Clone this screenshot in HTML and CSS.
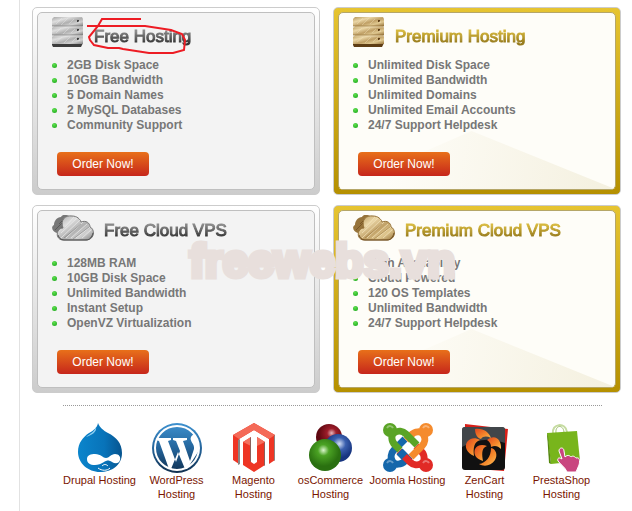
FILE: index.html
```
<!DOCTYPE html>
<html lang="en">
<head>
  <meta charset="utf-8">
  <title>Web Hosting Plans</title>
  <meta name="viewport" content="width=device-width, initial-scale=1">
  <link rel="stylesheet" href="styles.css">
</head>
<body>
  <svg class="defs" aria-hidden="true">
    <defs>
      <linearGradient id="metal" x1="0" y1="0" x2="1" y2="1">
        <stop offset="0" stop-color="#a5a5a5"/><stop offset=".3" stop-color="#dedede"/><stop offset=".55" stop-color="#b0b0b0"/><stop offset=".75" stop-color="#d0d0d0"/><stop offset="1" stop-color="#808080"/>
      </linearGradient>
      <linearGradient id="brass" x1="0" y1="0" x2="1" y2="1">
        <stop offset="0" stop-color="#b59657"/><stop offset=".3" stop-color="#ead6a6"/><stop offset=".55" stop-color="#c0a066"/><stop offset=".75" stop-color="#dfc78f"/><stop offset="1" stop-color="#96723a"/>
      </linearGradient>
      <symbol id="server" viewBox="0 0 32 30">
        <path d="M0 26h31l-2 4H1L0 28z" fill="var(--dark)"/>
        <path d="M2 0h28l1 2v7H0V2z" fill="var(--fill)"/>
        <path d="M2 9h28l1 2v7H0v-7z" fill="var(--fill)"/>
        <path d="M2 18h28l1 2v7H0v-7z" fill="var(--fill)"/>
        <path d="M0 9h31M0 18h31" stroke="var(--line)" fill="none" opacity=".7"/>
        <path d="M1 10h29M1 19h29" stroke="var(--light)" fill="none" opacity=".5"/>
        <path d="M4 7l6-6M9 8l7-7M17 7l5-5M4 16l5-5M11 17l6-6M19 16l4-4M4 25l6-5M12 26l6-6M20 25l5-5" stroke="var(--light)" opacity=".4"/>
        <path d="M25 4h2M25 13h2M25 22h2" stroke="var(--dark)" stroke-width="2"/>
        <path d="M26 5h2M26 14h2M26 23h2" stroke="var(--light)" opacity=".7"/>
      </symbol>
      <symbol id="cloud" viewBox="0 0 42 26">
        <path d="M5 18C1 17-2 12 2 10 2 6 5 2 9 2c2-4 9-2 11 2l-2 11z" fill="var(--line)"/>
        <path d="M3 15l10-10M6 17l11-12M7 9l5-5" stroke="var(--dark)" opacity=".5"/>
        <path d="M11 25c-5 0-7-5-5-9 1-2 3-3 5-3-3-8 2-13 9-12 5 0 8 3 9 6 5-2 9 1 9 5 5 2 5 12-3 13z" fill="var(--fill)" stroke="var(--line)"/>
        <path d="M13 12L22 2M9 18L25 3M9 23L28 5M14 23L31 7M19 23L35 9M24 23L38 12M30 23l9-8" stroke="var(--light)" opacity=".7"/>
        <path d="M12 23L29 9M21 24L37 12" stroke="var(--line)" opacity=".5"/>
        <path d="M6 20c1 3 3 5 6 5h22c4 0 6-3 7-7" fill="none" stroke="var(--dark)" opacity=".8"/>
      </symbol>
    </defs>
  </svg>

  <main class="page">
    <div class="plans">
      <section class="plan">
        <div class="plan-body">
          <div class="plan-header">
            <svg class="icon-server" aria-hidden="true"><use href="#server"/></svg>
            <h2>Free Hosting</h2>
            <svg class="scribble" viewBox="0 0 104 38" aria-hidden="true">
              <path d="M55 2H16L12 9 3 20l1 3 4 5 14 3h11l4 1 26 4h24l11-3 1-10-3-6-11-4-26-4H1"/>
            </svg>
          </div>
          <ul class="features">
            <li>2GB Disk Space</li>
            <li>10GB Bandwidth</li>
            <li>5 Domain Names</li>
            <li>2 MySQL Databases</li>
            <li>Community Support</li>
          </ul>
          <button class="order" type="button">Order Now!</button>
        </div>
      </section>

      <section class="plan premium">
        <div class="plan-body">
          <div class="plan-header">
            <svg class="icon-server" aria-hidden="true"><use href="#server"/></svg>
            <h2>Premium Hosting</h2>
          </div>
          <ul class="features">
            <li>Unlimited Disk Space</li>
            <li>Unlimited Bandwidth</li>
            <li>Unlimited Domains</li>
            <li>Unlimited Email Accounts</li>
            <li>24/7 Support Helpdesk</li>
          </ul>
          <button class="order" type="button">Order Now!</button>
        </div>
      </section>

      <section class="plan">
        <div class="plan-body">
          <div class="plan-header">
            <svg class="icon-cloud" aria-hidden="true"><use href="#cloud"/></svg>
            <h2>Free Cloud VPS</h2>
          </div>
          <ul class="features">
            <li>128MB RAM</li>
            <li>10GB Disk Space</li>
            <li>Unlimited Bandwidth</li>
            <li>Instant Setup</li>
            <li>OpenVZ Virtualization</li>
          </ul>
          <button class="order" type="button">Order Now!</button>
        </div>
      </section>

      <section class="plan premium">
        <div class="plan-body">
          <div class="plan-header">
            <svg class="icon-cloud" aria-hidden="true"><use href="#cloud"/></svg>
            <h2>Premium Cloud VPS</h2>
          </div>
          <ul class="features">
            <li>High Availability</li>
            <li>Cloud Powered</li>
            <li>120 OS Templates</li>
            <li>Unlimited Bandwidth</li>
            <li>24/7 Support Helpdesk</li>
          </ul>
          <button class="order" type="button">Order Now!</button>
        </div>
      </section>

      <div class="watermark">freewebs.vn</div>
    </div>

    <hr class="divider">

    <ul class="apps">
      <li><a href="#drupal">
        <svg viewBox="0 0 50 50" aria-hidden="true">
          <defs><linearGradient id="drop"><stop offset="0" stop-color="#0b85cc"/><stop offset=".6" stop-color="#0873b9"/><stop offset="1" stop-color="#06548f"/></linearGradient></defs>
          <path d="M23 0c2 5 5 7 10 10 8 4 14 10 14 20 0 12-10 19-22 19S3 40 3 29c0-9 5-15 11-19 5-3 8-5 9-10z" fill="url(#drop)"/>
          <path d="M21 4c-1 4-6 7-10 10 6-2 11-5 10-10z" fill="#8ccdf0"/>
          <path d="M20 31c6 0 8 4 11 4 3 0 5-4 9-4s6 3 5 6c-1 4-5 4-8 2-3-2-5-2-8 0-3 2-6 3-9 3-5 0-8-2-8-6 0-4 4-5 8-5z" fill="#fff"/>
          <path d="M27 43c2-2 4-2 6 0M23 45c4 3 9 3 12 0" fill="none" stroke="#fff"/>
        </svg>
        Drupal Hosting</a></li>
      <li><a href="#wordpress">
        <svg viewBox="0 0 50 50" aria-hidden="true">
          <defs><linearGradient id="wp" x2="0" y2="1"><stop offset="0" stop-color="#3e91cf"/><stop offset=".5" stop-color="#24659c"/><stop offset="1" stop-color="#102f4f"/></linearGradient></defs>
          <circle cx="25" cy="25" r="25" fill="url(#wp)"/>
          <circle cx="25" cy="25" r="22" fill="none" stroke="#fff" stroke-width="2"/>
          <path d="M5 15h14v2l-3 1 8 21 4-11-4-10-3-1v-2h14v2l-4 1 7 20 4-12c1-5-5-8-3-12 1-2 3-3 4-2l3 7v10L35 46h-2l-7-17-7 17h-2L7 18l-3-1z" fill="#fff"/>
        </svg>
        WordPress Hosting</a></li>
      <li><a href="#magento">
        <svg viewBox="0 0 50 50" aria-hidden="true">
          <path d="M25 0l21 12v25l-6 4V16L25 7 10 16v25l-6-4V12z" fill="#ee3524"/>
          <path d="M25 0l21 12-6 4-15-9-15 9-6-4z" fill="#f46a58"/>
          <path d="M9 17l2-1v25l-2 1zM45 12l1 1v24l-1 1z" fill="#8a8483"/>
          <path d="M14 19l8-5v25l3 2 3-2V14l8 5v23l-11 7-11-7z" fill="#ee3524"/>
          <path d="M14 19l8-5v9l-4-2zM28 14l8 5-4 2-4 2z" fill="#f4705e"/>
          <path d="M21 15l1-1v25l-1-1zM35 19l1 1v22l-1 1z" fill="#8c5f5b"/>
        </svg>
        Magento Hosting</a></li>
      <li><a href="#oscommerce">
        <svg viewBox="0 0 50 50" aria-hidden="true">
          <defs>
            <radialGradient id="ballR" cx=".6" cy=".35"><stop offset="0" stop-color="#e8b7bd"/><stop offset=".35" stop-color="#9d1d2a"/><stop offset="1" stop-color="#5e0710"/></radialGradient>
            <radialGradient id="ballB" cx=".55" cy=".35"><stop offset="0" stop-color="#d4e0f5"/><stop offset=".45" stop-color="#3a5fae"/><stop offset="1" stop-color="#173580"/></radialGradient>
            <radialGradient id="ballG" cx=".45" cy=".35"><stop offset="0" stop-color="#dbf5cd"/><stop offset=".35" stop-color="#4ba324"/><stop offset="1" stop-color="#2a7010"/></radialGradient>
          </defs>
          <circle cx="23" cy="14" r="13" fill="url(#ballR)"/>
          <circle cx="32" cy="25" r="14" fill="url(#ballB)"/>
          <circle cx="19" cy="32" r="16" fill="url(#ballG)"/>
        </svg>
        osCommerce Hosting</a></li>
      <li><a href="#joomla">
        <svg viewBox="0 0 50 50" aria-hidden="true">
          <defs>
            <path id="arm" d="M17 27l-5-5C8 18 8 12 11 10c4-3 9-2 12 1l11 11" fill="none" stroke-width="7"/>
          </defs>
          <use href="#arm" stroke="#1567ab" transform="rotate(-90 25 25)"/>
          <use href="#arm" stroke="#e12a26" transform="rotate(180 25 25)"/>
          <use href="#arm" stroke="#f58b2d" transform="rotate(90 25 25)"/>
          <use href="#arm" stroke="#5aa426"/>
          <path d="M16 34l6-6" stroke="#1567ab" stroke-width="7"/>
          <circle cx="7" cy="7" r="7" fill="#5aa426"/><circle cx="43" cy="7" r="7" fill="#f58b2d"/>
          <circle cx="7" cy="42" r="7" fill="#1567ab"/><circle cx="43" cy="42" r="7" fill="#e12a26"/>
          <path d="M4 5c2-3 5-2 6 0M40 5c2-3 5-2 6 0M4 40c2-3 5-2 6 0M40 40c2-3 5-2 6 0" fill="none" stroke="#fff" stroke-width="2" opacity=".35"/>
        </svg>
        Joomla Hosting</a></li>
      <li><a href="#zencart">
        <svg viewBox="0 0 50 50" aria-hidden="true">
          <defs><linearGradient id="flame" x2="1" y2="1"><stop offset="0" stop-color="#e2451c"/><stop offset=".6" stop-color="#f58a2c"/><stop offset="1" stop-color="#ffc35a"/></linearGradient></defs>
          <path d="M5 1l43 5-4 42-40-3z" fill="#d8201a"/>
          <rect x="2" y="4" width="43" height="43" rx="3" fill="#111"/>
          <path d="M5 4h37q3 0 3 3v13Q24 12 2 24V7q0-3 3-3z" fill="#555d63" opacity=".7"/>
          <g fill="url(#flame)">
            <path d="M15 6c8-1 14 3 16 9-4-2-8-2-10 1-4-1-6-5-6-10z"/>
            <path d="M27 17c8-7 15 0 14 9-3-3-6-4-10-2 0-3-1-5-4-7z"/>
            <path d="M31 25c5 1 7 7 4 12-4 6-11 7-16 4 7-1 12-7 12-16z"/>
            <path d="M27 23c-6 2-5 9-4 15-7-2-10-7-8-12 2-4 7-5 12-3z"/>
            <path d="M20 17c-6 2-7 8-6 16C7 30 4 24 7 19c3-4 8-5 13-2z"/>
          </g>
        </svg>
        ZenCart Hosting</a></li>
      <li><a href="#prestashop">
        <svg viewBox="0 0 50 50" aria-hidden="true">
          <path d="M16 11C14 0 29-1 30 9" fill="none" stroke="#c5dba0" stroke-width="2"/>
          <path d="M19 10C18 2 26 1 27 9" fill="none" stroke="#9ebf6c"/>
          <path d="M10 10l30-2 3 30-29 3z" fill="#78b51c"/>
          <path d="M10 10l1 3 3 28-2-1z" fill="#55880e"/>
          <path d="M22 28c0-4 5-4 5 0l1 6c3-3 5-1 6 0 2-2 4 0 5 1 4-1 4 3 3 7l-3 7h-9c-2-5-6-7-9-11-1-3 1-4 4-2z" fill="#c9467f" stroke="#fff"/>
        </svg>
        PrestaShop Hosting</a></li>
    </ul>
  </main>
</body>
</html>
```
FILE: styles.css
```
* {
  box-sizing: border-box;
}
body {
  margin: 0;
  font-family: "Liberation Sans", Arial, sans-serif;
  font-size: 12px;
  background: #fff;
}
h2, ul {
  margin: 0;
  padding: 0;
}
ul {
  list-style: none;
}
.defs {
  position: absolute;
  width: 0;
  height: 0;
}
.page {
  min-height: 100vh;
  margin-left: 19px;
  padding: 7px 11px 0 12px;
  border-left: 1px solid #e2e2e2;
}

/* plans */
.plans {
  position: relative;
  display: grid;
  grid-template-columns: 1fr 1fr;
  gap: 10px 13px;
}
.plan {
  --fill: url(#metal);
  --line: #777;
  --dark: #3c3c3c;
  --light: #eee;
  padding: 4px;
  border: 1px solid #ccc;
  border-radius: 5px;
  background: linear-gradient(#fff, #ccc);
}
.plan-body {
  position: relative;
  padding: 0 14px 13px;
  border: 1px solid #bfbfbf;
  border-radius: 5px;
  background: #f3f3f3;
}
.premium {
  --fill: url(#brass);
  --line: #96733a;
  --dark: #5e3d14;
  --light: #f5e6bf;
  background: linear-gradient(#e6c431, #b59000);
}
.premium .plan-body {
  border-color: #b5a668;
  background: #fefdf8;
}
.premium .plan-body::before {
  content: "";
  position: absolute;
  inset: 0;
  background: linear-gradient(100deg, #fefdf8 25%, #f4f0df);
  clip-path: polygon(0 100%, 48% 67%, 100% 100%);
}
.plan-header {
  position: relative;
  display: grid;
  grid-template-columns: auto 1fr;
  align-content: start;
  align-items: end;
  gap: 10px;
  min-height: 45px;
  padding-top: 4px;
}
.icon-server {
  width: 32px;
  height: 30px;
}
.icon-cloud {
  width: 42px;
  height: 26px;
}
.plan h2 {
  font-size: 17px;
  font-weight: normal;
  line-height: 20px;
  color: transparent;
  background: linear-gradient(#888 20%, #333 80%);
  background-clip: text;
  -webkit-background-clip: text;
  -webkit-text-stroke: 1px transparent;
}
.plan.premium h2 {
  background-image: linear-gradient(#d6b83c 20%, #94781a 80%);
}
.scribble {
  position: absolute;
  top: 4px;
  left: 34px;
  width: 104px;
  height: 38px;
  fill: none;
  stroke: #ed1c24;
  stroke-width: 2;
}
.features {
  position: relative;
  font-weight: bold;
  line-height: 15px;
  color: #777;
}
.features li {
  display: flex;
  align-items: center;
  gap: 10px;
}
.features li::before {
  content: "";
  width: 5px;
  height: 5px;
  border-radius: 50%;
  background: radial-gradient(circle at 40% 30%, #5fe04f, #17a317);
}
.order {
  position: relative;
  display: block;
  width: 92px;
  height: 24px;
  margin: 19px 0 0 5px;
  padding: 0;
  border: 0;
  border-radius: 4px;
  font: inherit;
  color: #fff;
  background: linear-gradient(#e8701a, #c6261b);
  cursor: pointer;
}
.watermark {
  position: absolute;
  top: 58%;
  left: 50%;
  margin-left: -137px;
  font-size: 46px;
  font-weight: bold;
  line-height: 60px;
  color: #e8dfdc;
  -webkit-text-stroke: 5px #e8dfdc;
  pointer-events: none;
}

/* applications */
.divider {
  margin: 12px 19px 0 31px;
  border: 0;
  border-top: 1px dotted #999;
}
.apps {
  display: grid;
  grid-template-columns: repeat(7, 1fr);
  margin: 17px 21px 0 29px;
}
.apps a {
  display: block;
  font-size: 11px;
  line-height: 14px;
  text-align: center;
  text-decoration: none;
  color: #7a1500;
}
.apps svg {
  display: block;
  width: 50px;
  height: 50px;
  margin: 0 auto;
}
```
